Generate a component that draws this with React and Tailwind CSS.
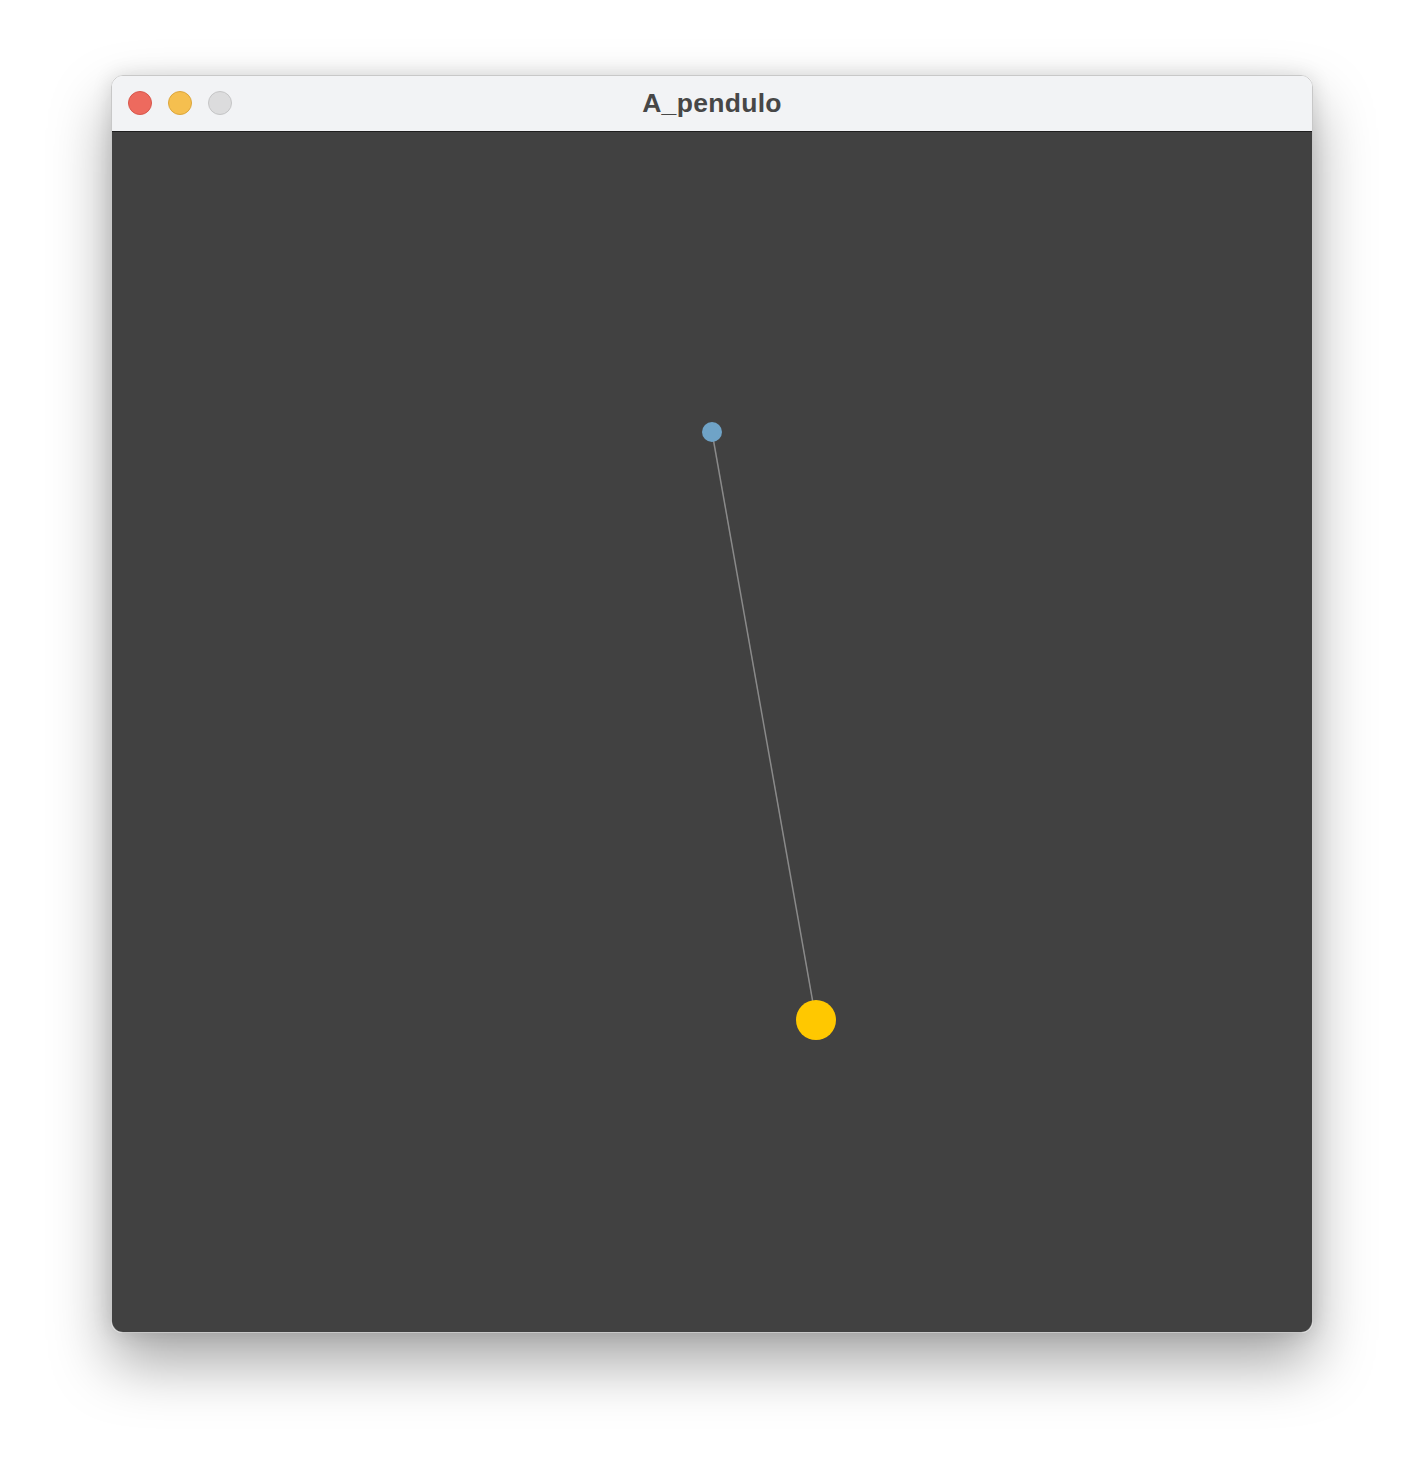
import React from 'react';

const App = () => {
  const pivot = { x: 600, y: 300 };
  const bob = { x: 704, y: 888 };

  return (
    <div className="w-[1424px] h-[1480px] bg-white flex justify-center pt-[75px]" style={{ fontFamily: '"Liberation Sans", Arial, sans-serif' }}>
      <div className="w-[1202px] h-[1258px] rounded-[12px] overflow-hidden flex flex-col border border-[#c8c8c8] shadow-[0_30px_60px_rgba(0,0,0,0.35),0_0_20px_rgba(0,0,0,0.12)]">
        {/* title bar */}
        <div className="relative h-[56px] bg-[#f2f3f5] border-b border-[#1e1e1e] flex items-center justify-center shrink-0">
          <div className="absolute left-[16px] top-[15px] flex gap-[16px]">
            <div className="w-[24px] h-[24px] rounded-full bg-[#ed6a5e] border border-[#d8574c]" />
            <div className="w-[24px] h-[24px] rounded-full bg-[#f5bf4f] border border-[#dca63c]" />
            <div className="w-[24px] h-[24px] rounded-full bg-[#dcdcdd] border border-[#c5c5c6]" />
          </div>
          <span className="text-[26.5px] font-bold text-[#474747] tracking-[0.3px]">A_pendulo</span>
        </div>
        {/* canvas */}
        <div className="flex-1 bg-[#414141]">
          <svg width="1200" height="1200" viewBox="0 0 1200 1200" className="block">
            <line x1={pivot.x} y1={pivot.y} x2={bob.x} y2={bob.y} stroke="#8a8a8a" strokeWidth="1.5" />
            <circle cx={pivot.x} cy={pivot.y} r="10" fill="#6fa3c7" />
            <circle cx={bob.x} cy={bob.y} r="20" fill="#ffc800" />
          </svg>
        </div>
      </div>
    </div>
  );
};

export default App;
